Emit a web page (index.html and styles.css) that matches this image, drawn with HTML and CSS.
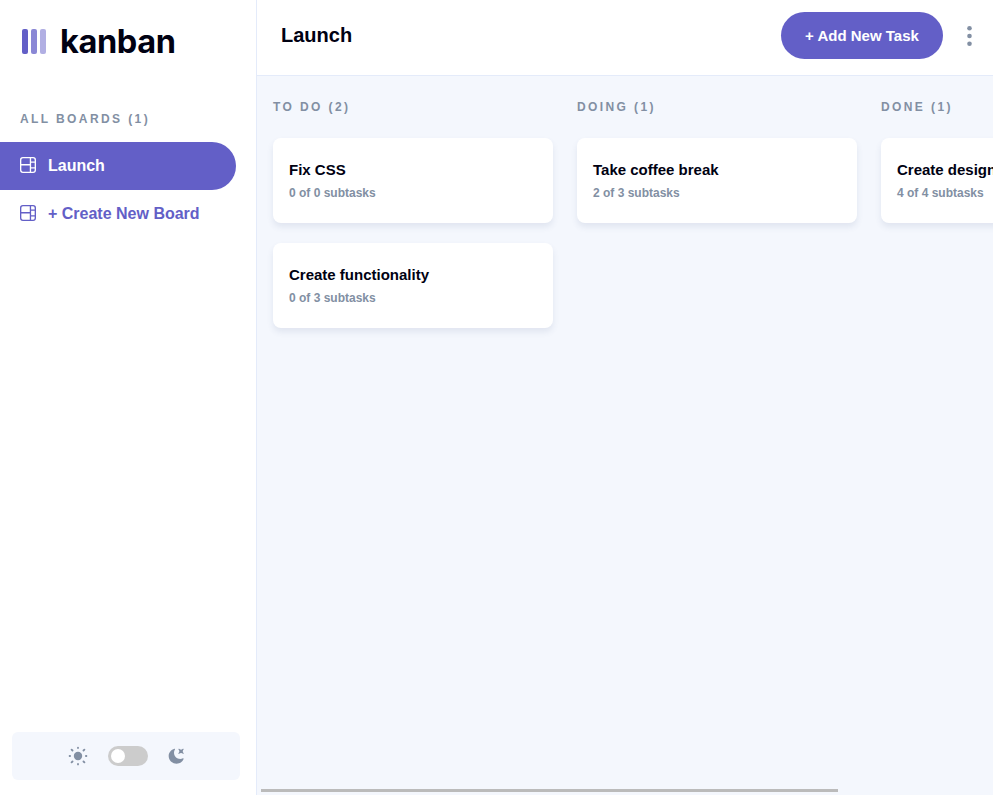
FILE: index.html
```html
<!DOCTYPE html>
<html lang="en">
<head>
<meta charset="utf-8">
<title>Kanban</title>
<link rel="stylesheet" href="styles.css">
</head>
<body>
<svg class="defs" width="0" height="0">
  <symbol id="board" viewBox="0 0 16 16"><path fill="currentColor" d="M0 2.889A2.889 2.889 0 0 1 2.889 0H13.11A2.889 2.889 0 0 1 16 2.889V13.11A2.888 2.888 0 0 1 13.111 16H2.89A2.889 2.889 0 0 1 0 13.111V2.89Zm1.333 5.555v4.667c0 .859.697 1.556 1.556 1.556h6.889V8.444H1.333Zm8.445-1.333V1.333h-6.89A1.556 1.556 0 0 0 1.334 2.89V7.11h8.445Zm4.889-1.333H11.11v4.444h3.556V5.778Zm0 5.778H11.11v3.11h2a1.556 1.556 0 0 0 1.556-1.555v-1.555Zm0-7.112V2.89a1.555 1.555 0 0 0-1.556-1.556h-2v3.111h3.556Z"/></symbol>
</svg>
<div class="app">
  <aside class="sidebar">
    <div class="logo">
      <svg width="24" height="25" viewBox="0 0 24 25" fill="#635fc7">
        <rect width="6" height="25" rx="2"/>
        <rect x="9" width="6" height="25" rx="2" opacity=".75"/>
        <rect x="18" width="6" height="25" rx="2" opacity=".5"/>
      </svg>
      <span class="wordmark">kanban</span>
    </div>
    <h2 class="label boards-label">ALL BOARDS (1)</h2>
    <nav class="boards">
      <a class="board active"><svg width="16" height="16"><use href="#board"/></svg>Launch</a>
      <a class="board"><svg width="16" height="16"><use href="#board"/></svg>+ Create New Board</a>
    </nav>
    <div class="theme">
      <svg class="sun" width="20" height="20" viewBox="-10 -10 20 20">
        <circle r="4.2" fill="#828fa3"/>
        <path stroke="#828fa3" stroke-width="1.8" stroke-linecap="round" d="M0-8.4V-7.9M0 8.4V7.9M-8.4 0H-7.9M8.4 0H7.9M-6.4-6.4l.9.9M6.4-6.4l-.9.9M-6.4 6.4l.9-.9M6.4 6.4l-.9-.9"/>
      </svg>
      <span class="toggle"></span>
      <svg width="16" height="16" viewBox="0 0 16 16"><path fill="#828fa3" d="M6.474.682c.434-.11.718.406.481.78A6.067 6.067 0 0 0 6.01 4.72c0 3.418 2.827 6.187 6.314 6.187.89.002 1.77-.182 2.584-.54.408-.18.894.165.724.57-1.16 2.775-3.944 4.73-7.194 4.73-4.292 0-7.771-3.41-7.771-7.615 0-3.541 2.466-6.518 5.807-7.37Zm8.433.07c.442-.294.969.232.674.674l-.525.787a1.943 1.943 0 0 0 0 2.157l.525.788c.295.441-.232.968-.674.673l-.787-.525a1.943 1.943 0 0 0-2.157 0l-.786.525c-.442.295-.97-.232-.675-.673l.525-.788a1.943 1.943 0 0 0 0-2.157l-.525-.787c-.295-.442.232-.968.674-.673l.787.525a1.943 1.943 0 0 0 2.157 0Z"/></svg>
    </div>
  </aside>
  <main class="main">
    <header class="header">
      <h1 class="title">Launch</h1>
      <button class="add">+ Add New Task</button>
      <svg class="more" width="5" height="20" viewBox="0 0 5 20" fill="#828fa3"><circle cx="2.5" cy="2.3" r="2.3"/><circle cx="2.5" cy="10" r="2.3"/><circle cx="2.5" cy="17.7" r="2.3"/></svg>
    </header>
    <div class="columns">
      <section class="column">
        <h2 class="label">TO DO (2)</h2>
        <article class="card"><h3>Fix CSS</h3><p>0 of 0 subtasks</p></article>
        <article class="card"><h3>Create functionality</h3><p>0 of 3 subtasks</p></article>
      </section>
      <section class="column">
        <h2 class="label">DOING (1)</h2>
        <article class="card"><h3>Take coffee break</h3><p>2 of 3 subtasks</p></article>
      </section>
      <section class="column">
        <h2 class="label">DONE (1)</h2>
        <article class="card"><h3>Create design</h3><p>4 of 4 subtasks</p></article>
      </section>
    </div>
    <div class="scrollbar"></div>
  </main>
</div>
</body>
</html>
```
FILE: styles.css
```css
* { box-sizing: border-box; margin: 0; }
body { font-family: "Liberation Sans", Arial, sans-serif; overflow: hidden; }
.defs { display: none; }
.app { display: flex; height: 100vh; }
.sidebar { width: 257px; flex: none; display: flex; flex-direction: column; border-right: 1px solid #e4ebfa; background: #fff; }
.logo { display: flex; align-items: center; gap: 14px; height: 41px; margin: 21px 0 0 22px; flex: none; }
.wordmark { font: 700 32.5px/41px Inter, sans-serif; letter-spacing: -0.4px; color: #000112; }
.label { font-size: 12px; line-height: 15px; font-weight: 700; letter-spacing: 2.4px; color: #828fa3; white-space: nowrap; }
.boards-label { margin: 50px 0 15px 20px; }
.board { display: flex; align-items: center; gap: 12px; width: 236px; height: 48px; padding-left: 20px; padding-bottom: 1px; font-size: 16px; font-weight: 700; color: #635fc7; border-radius: 0 100px 100px 0; }
.board svg { margin-bottom: 2px; }
.board.active { background: #635fc7; color: #fff; }
.theme { display: flex; align-items: center; justify-content: center; gap: 20px; width: 228px; height: 48px; margin: auto 0 15px 12px; background: #f4f7fd; border-radius: 6px; }
.toggle { display: flex; align-items: center; width: 40px; height: 20px; padding-left: 3px; background: #ccc; border-radius: 10px; }
.toggle::before { content: ""; width: 14px; height: 14px; border-radius: 50%; background: #fff; }
.main { flex: 1; min-width: 0; display: flex; flex-direction: column; background: #f4f7fd; overflow: hidden; }
.header { display: flex; align-items: center; height: 76px; flex: none; padding: 0 21px 5px 24px; background: #fff; border-bottom: 1px solid #e4ebfa; }
.title { flex: 1; font-size: 20px; line-height: 24px; color: #000112; }
.add { width: 162px; height: 47px; border: 0; border-radius: 24px; background: #635fc7; color: #fff; font: 700 15px "Liberation Sans", Arial, sans-serif; }
.more { margin: 2px 0 0 24px; }
.columns { flex: 1; display: flex; gap: 24px; padding: 24px 16px 0; }
.column { width: 280px; flex: none; display: flex; flex-direction: column; gap: 20px; }
.column .label { margin-bottom: 3px; }
.card { height: 85px; padding: 22px 16px; background: #fff; border-radius: 8px; box-shadow: 0 4px 6px rgba(54, 78, 126, .1); }
.card h3 { font-size: 15px; line-height: 19px; color: #000112; white-space: nowrap; }
.card p { margin-top: 7px; font-size: 12px; line-height: 15px; font-weight: 700; color: #828fa3; }
.scrollbar { width: 577px; height: 3px; margin: 0 0 3px 4px; background: #bbb; }
```
